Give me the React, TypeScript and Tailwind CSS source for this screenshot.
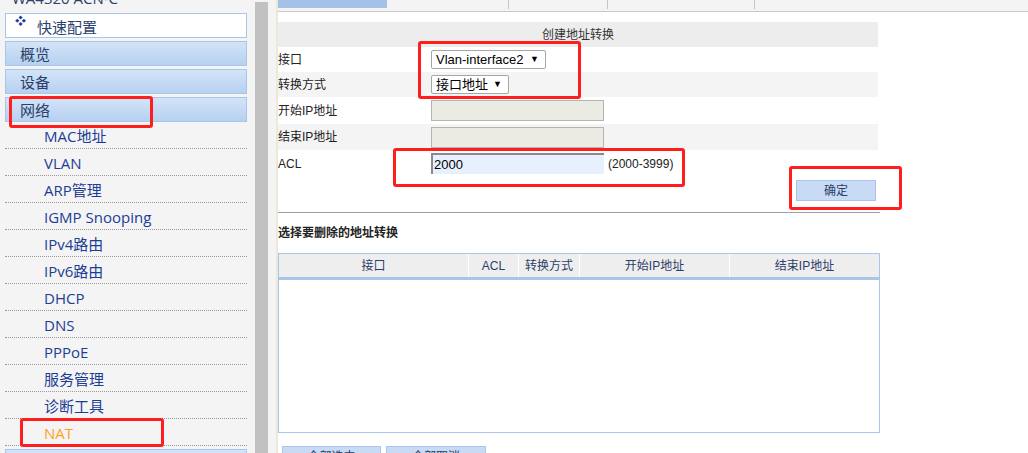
import React from 'react';

const subItems = ['MAC地址', 'VLAN', 'ARP管理', 'IGMP Snooping', 'IPv4路由', 'IPv6路由', 'DHCP', 'DNS', 'PPPoE', '服务管理', '诊断工具'];

const sideFont = { fontFamily: '"Open Sans", "Noto Sans CJK SC", sans-serif' };
const formFont = { fontFamily: '"Liberation Sans", "Noto Sans CJK SC", sans-serif' };

function TopItem({ label }: { label: string }) {
  return (
    <div className="h-[25px] border border-[#a9c6ea] bg-gradient-to-b from-[#d3e4f8] to-[#b6d1f1] flex items-center pl-[14px] pt-[1px] text-[15px] text-[#2c3e6a]">
      {label}
    </div>
  );
}

function Sidebar() {
  return (
    <div className="relative w-[255px] h-full bg-[#f4f4f4] overflow-hidden" style={sideFont}>
      <div className="h-[13px] pl-[12px] text-[15px] leading-none text-[#2c3e6a] -mt-[9px]">WA4320 ACN-C</div>
      <div className="mt-[9px] pl-[5px] pr-[8px] flex flex-col">
        <div className="h-[25px] border border-[#a9c6ea] bg-white flex items-center text-[15px] text-[#2c3e6a]">
          <span className="text-[11px] text-[#1c3d94] ml-[9px] -mt-[9px] w-[22px]">❖</span>
          <span className="mt-[3px]">快速配置</span>
        </div>
        <div className="mt-[3px]"><TopItem label="概览" /></div>
        <div className="mt-[3px]"><TopItem label="设备" /></div>
        <div className="mt-[3px]"><TopItem label="网络" /></div>
        {subItems.map((s) => (
          <div key={s} className="h-[27px] border-b border-dotted border-[#9a9a9a] flex items-center pl-[39px] pt-[2px] text-[15px] text-[#1c3d94]">
            {s}
          </div>
        ))}
        <div className="h-[27px] border-b border-dotted border-[#9a9a9a] flex items-center pl-[39px] pt-[2px] text-[15px] text-[#ffa31a]">NAT</div>
        <div className="mt-[3px] h-[25px] border border-[#a9c6ea] bg-gradient-to-b from-[#d3e4f8] to-[#b6d1f1]" />
      </div>
      <div className="absolute left-[9px] top-[96px] w-[144px] h-[32px] border-[3px] border-[#ff1e1e] rounded-[3px]" />
      <div className="absolute left-[20px] top-[418px] w-[144px] h-[29px] border-[3px] border-[#ff1e1e] rounded-[3px]" />
    </div>
  );
}

function Row({ label, bg, h, children }: { label: string; bg: string; h: string; children?: React.ReactNode }) {
  return (
    <div className={`flex items-center ${bg} ${h}`}>
      <div className="w-[153px] text-[12px] text-[#222]">{label}</div>
      <div className="flex items-center">{children}</div>
    </div>
  );
}

function Select({ text, w }: { text: string; w: string }) {
  return (
    <div className={`${w} h-[19px] border border-[#a6a6a6] bg-white flex items-center justify-between pl-[4px] pr-[6px] text-[13px] text-black rounded-[2px]`}>
      <span>{text}</span>
      <span className="text-[9px]">▼</span>
    </div>
  );
}

function Main() {
  return (
    <div className="relative flex-1 h-full bg-white" style={formFont}>
      <div className="h-[12px] bg-[#f4f4f4] border-b border-[#c8c8c8] flex">
        <div className="w-[109px] h-[8px] bg-[#a4c2e8]" />
        <div className="w-[121px]" />
        <div className="w-px h-[9px] bg-[#c4c4c4]" />
        <div className="w-[98px]" />
        <div className="w-px h-[9px] bg-[#c4c4c4]" />
        <div className="w-[146px]" />
        <div className="w-px h-[9px] bg-[#c4c4c4]" />
      </div>
      <div className="mt-[10px] w-[600px]">
        <div className="h-[25px] bg-[#ededed] flex items-center justify-center text-[12px] text-[#333]">创建地址转换</div>
        <Row label="接口" bg="bg-white" h="h-[25px]">
          <Select text="Vlan-interface2" w="w-[115px]" />
        </Row>
        <Row label="转换方式" bg="bg-[#f4f4f4]" h="h-[25px]">
          <Select text="接口地址" w="w-[78px]" />
        </Row>
        <Row label="开始IP地址" bg="bg-white" h="h-[27px]">
          <div className="w-[173px] h-[21px] border border-[#b4b4b4] bg-[#ebebe4]" />
        </Row>
        <Row label="结束IP地址" bg="bg-[#f4f4f4]" h="h-[26px]">
          <div className="w-[173px] h-[21px] border border-[#b4b4b4] bg-[#ebebe4]" />
        </Row>
        <Row label="ACL" bg="bg-white" h="h-[27px]">
          <div className="w-[173px] h-[21px] border-t-2 border-l-2 border-[#8a8a8a] bg-[#e8f0fe] flex items-center pl-[1px] text-[13px] text-black">2000</div>
          <span className="ml-[4px] text-[12px] text-[#222]">(2000-3999)</span>
        </Row>
        <div className="flex justify-end pr-[2px] mt-[3px]">
          <div className="w-[80px] h-[21px] bg-[#c8daf4] border border-[#a9c6ea] flex items-center justify-center text-[12px] text-[#2c3e6a]">确定</div>
        </div>
      </div>
      <div className="mt-[11px] w-[602px] h-px bg-[#a0a0a0]" />
      <div className="mt-[11px] text-[12px] font-bold text-[#222]">选择要删除的地址转换</div>
      <div className="mt-[11px] w-[602px] border border-[#a9c6ea]">
        <div className="h-[26px] bg-[#eeeeee] border-b-[3px] border-[#a9c6ea] flex text-[12px] text-[#2c3e6a]">
          <div className="w-[190px] flex items-center justify-center border-r border-white">接口</div>
          <div className="w-[50px] flex items-center justify-center border-r border-white">ACL</div>
          <div className="w-[61px] flex items-center justify-center border-r border-white">转换方式</div>
          <div className="w-[150px] flex items-center justify-center border-r border-white">开始IP地址</div>
          <div className="flex-1 flex items-center justify-center">结束IP地址</div>
        </div>
        <div className="h-[152px] bg-white" />
      </div>
      <div className="mt-[13px] ml-[4px] flex gap-[5px]">
        <div className="w-[99px] h-[21px] bg-[#c8daf4] border border-[#a9c6ea] flex items-center justify-center text-[12px] text-[#2c3e6a]">全部选中</div>
        <div className="w-[100px] h-[21px] bg-[#c8daf4] border border-[#a9c6ea] flex items-center justify-center text-[12px] text-[#2c3e6a]">全部取消</div>
      </div>
      <div className="absolute left-[140px] top-[41px] w-[163px] h-[58px] border-[3px] border-[#ff1e1e] rounded-[3px]" />
      <div className="absolute left-[115px] top-[148px] w-[292px] h-[39px] border-[3px] border-[#ff1e1e] rounded-[3px]" />
      <div className="absolute left-[511px] top-[166px] w-[113px] h-[44px] border-[3px] border-[#ff1e1e] rounded-[3px]" />
    </div>
  );
}

export default function App() {
  return (
    <div className="w-[1028px] h-[453px] flex overflow-hidden bg-white">
      <Sidebar />
      <div className="w-[13px] h-full pt-[2px] bg-[#f4f4f4]">
        <div className="h-full bg-[#c1c1c1]" />
      </div>
      <div className="w-[8px] h-full bg-[#f4f4f4]" />
      <div className="w-[2px] h-full bg-[#ece9d8]" />
      <Main />
    </div>
  );
}
